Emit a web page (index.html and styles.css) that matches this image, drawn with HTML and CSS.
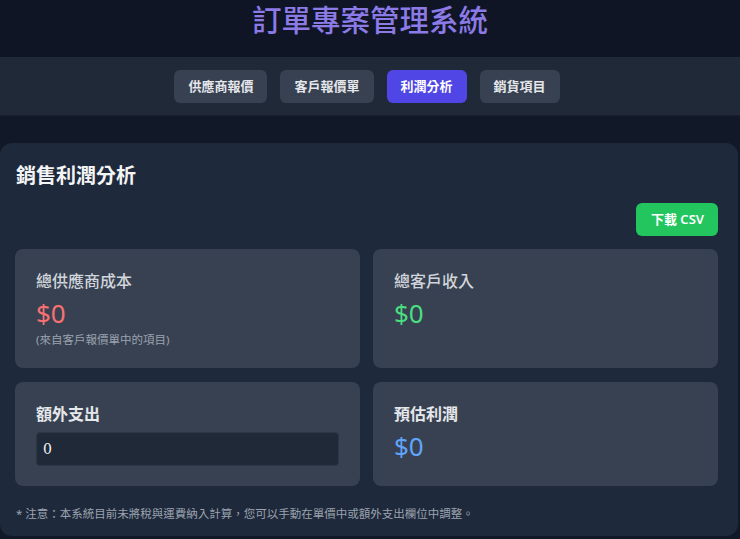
FILE: index.html
```html
<!DOCTYPE html>
<html lang="zh-Hant">
<head>
    <meta charset="UTF-8">
    <title>訂單專案管理系統</title>
    <link rel="stylesheet" href="styles.css">
</head>
<body>
    <header class="top">
        <h1>訂單專案管理系統</h1>
    </header>

    <!-- 分頁 -->
    <nav class="tabs">
        <button class="tab">供應商報價</button>
        <button class="tab">客戶報價單</button>
        <button class="tab active">利潤分析</button>
        <button class="tab">銷貨項目</button>
    </nav>

    <section class="panel">
        <h2>銷售利潤分析</h2>

        <div class="actions">
            <button class="btn-csv">下載 CSV</button>
        </div>

        <div class="stats">
            <div class="stat">
                <div class="stat-label">總供應商成本</div>
                <div class="stat-value cost">$0</div>
                <div class="stat-note">(來自客戶報價單中的項目)</div>
            </div>
            <div class="stat">
                <div class="stat-label">總客戶收入</div>
                <div class="stat-value income">$0</div>
            </div>
            <div class="stat">
                <label class="stat-label strong" for="extra">額外支出</label>
                <input id="extra" class="field" type="number" value="0">
            </div>
            <div class="stat">
                <div class="stat-label strong">預估利潤</div>
                <div class="stat-value profit">$0</div>
            </div>
        </div>

        <p class="note">* 注意：本系統目前未將稅與運費納入計算，您可以手動在單價中或額外支出欄位中調整。</p>
    </section>
</body>
</html>
```

FILE: styles.css
```css
body {
    margin: 0;
    background: #111827;
    color: #e5e7eb;
    font-family: "Noto Sans", "Noto Sans CJK TC", sans-serif;
}

.top {
    background: #0f1524;
    padding: 2px 0 19px;
    text-align: center;
}

h1 {
    margin: 0;
    font-size: 29.5px;
    line-height: 36px;
    font-weight: 500;
    color: #8c7ae6;
}

.tabs {
    background: #1f2937;
    border-bottom: 1px solid #18202c;
    padding: 13px 0 12px;
    display: flex;
    justify-content: center;
    gap: 13px;
    padding-right: 6px;
}

.tab {
    background-color: #374151;
    border: none;
    color: #e5e7eb;
    padding: 8px 14px;
    border-radius: 6px;
    font-family: inherit;
    font-size: 13px;
    line-height: 17px;
    font-weight: 700;
    cursor: pointer;
}

.tab.active {
    background-color: #4f46e5;
    color: #ffffff;
}

.panel {
    width: 738px;
    box-sizing: border-box;
    margin-top: 27px;
    background: #1e293b;
    border-radius: 12px;
    padding: 19px 20px 14px 15px;
}

h2 {
    margin: 0 0 0 1px;
    font-size: 20px;
    line-height: 28px;
    font-weight: 700;
    color: #f3f4f6;
}

.actions {
    display: flex;
    justify-content: flex-end;
    margin: 13px 0 13px;
}

.btn-csv {
    background-color: #22c55e;
    border: none;
    color: white;
    padding: 8px 14px 8px 15px;
    border-radius: 6px;
    font-family: inherit;
    font-size: 13px;
    line-height: 17px;
    font-weight: 600;
    cursor: pointer;
}

.stats {
    display: grid;
    grid-template-columns: 1fr 1fr;
    gap: 14px 13px;
}

.stat {
    background: #374151;
    border-radius: 8px;
    padding: 20px 21px;
}

.stat-label {
    display: block;
    font-size: 16px;
    line-height: 24px;
    font-weight: 500;
    color: #d1d5db;
}

.stat-label.strong {
    font-weight: 600;
    color: #e5e7eb;
}

.stat-value {
    margin-top: 4px;
    font-size: 26px;
    line-height: 32px;
}

.cost {
    color: #f87171;
}

.income {
    color: #4ade80;
}

.profit {
    color: #60a5fa;
}

.stat-note {
    margin-top: 2px;
    font-size: 11.5px;
    line-height: 17px;
    color: #9ca3af;
}

.field {
    display: block;
    width: 100%;
    box-sizing: border-box;
    margin-top: 6px;
    height: 34px;
    padding: 0 6px;
    background: #1f2937;
    border: 1px solid #2b3646;
    border-radius: 4px;
    color: #f3f4f6;
    font-family: "DejaVu Serif", serif;
    font-size: 14px;
    -moz-appearance: textfield;
}

.field::-webkit-outer-spin-button,
.field::-webkit-inner-spin-button {
    -webkit-appearance: none;
    margin: 0;
}

.note {
    margin: 19px 0 0 1px;
    font-size: 11.5px;
    line-height: 17px;
    color: #9ca3af;
}
```
